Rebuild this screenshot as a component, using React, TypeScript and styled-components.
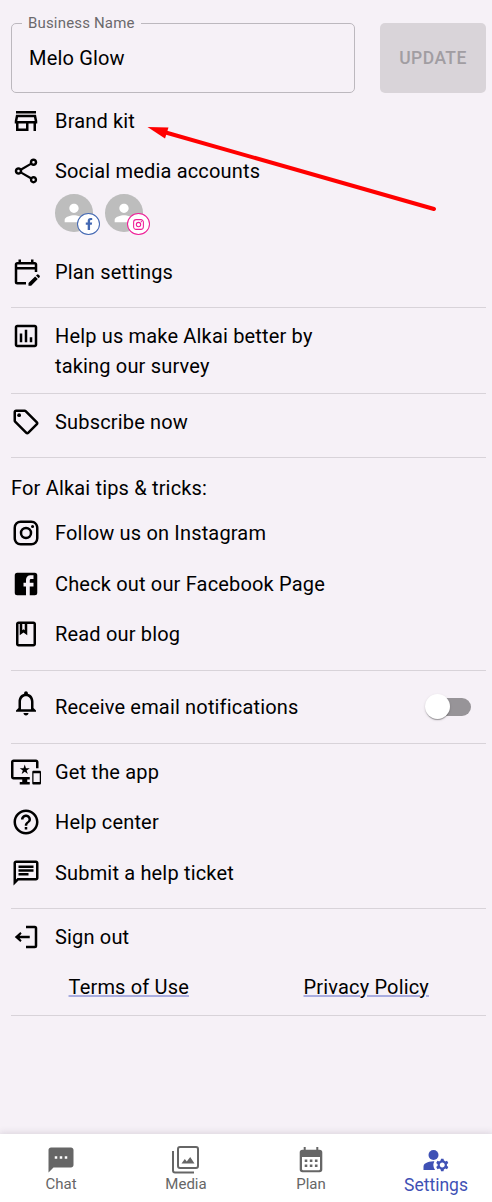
import React from "react";
import styled, { createGlobalStyle } from "styled-components";
import {
  MdOutlineStore,
  MdOutlineShare,
  MdOutlineEditCalendar,
  MdOutlinePoll,
  MdOutlineLocalOffer,
  MdOutlineClass,
  MdNotificationsNone,
  MdHelpOutline,
  MdOutlineChat,
  MdPerson,
  MdSms,
  MdManageAccounts,
} from "react-icons/md";
import { FaFacebookF } from "react-icons/fa";

const GlobalStyle = createGlobalStyle`
  * { box-sizing: border-box; }
  body {
    margin: 0;
    background: #f6f1f7;
    font-family: Roboto, sans-serif;
    color: #000;
  }
`;

const Page = styled.div`
  position: relative;
  display: flex;
  flex-direction: column;
  width: 492px;
  height: 1202px;
  overflow: hidden;
  background: #f6f1f7;
`;

const Content = styled.main`
  flex: 1;
  padding: 0 6px 0 11px;
`;

const Header = styled.div`
  display: flex;
  justify-content: space-between;
  padding: 14px 0 3px;
`;

const Field = styled.fieldset`
  width: 344px;
  height: 79px;
  margin: 0;
  padding: 0 17px;
  border: 1px solid #bcb8be;
  border-radius: 5px;
`;

const FieldLabel = styled.legend`
  height: 18px;
  margin-left: -7px;
  padding: 0 6px;
  font-size: 15px;
  line-height: 18px;
  letter-spacing: 0.17px;
  color: #6b696c;
`;

const FieldInput = styled.input`
  display: block;
  width: 100%;
  height: 52px;
  padding: 0;
  border: 0;
  outline: 0;
  background: transparent;
  font: 20px Roboto, sans-serif;
  letter-spacing: 0.17px;
  color: #000;
`;

const UpdateButton = styled.button`
  width: 106px;
  height: 70px;
  margin-top: 9px;
  padding: 0;
  border: 0;
  border-radius: 5px;
  background: #d9d4d9;
  color: #a19da2;
  font: 500 17.5px Roboto, sans-serif;
  letter-spacing: 0.45px;
`;

const Section = styled.section<{ $top?: number; $bottom?: number }>`
  padding-top: ${(p) => p.$top ?? 0}px;
  padding-bottom: ${(p) => p.$bottom ?? 0}px;
  border-bottom: 1px solid #d8d3d9;
`;

const Row = styled.div<{ $gap?: number }>`
  display: flex;
  align-items: flex-start;
  margin-bottom: ${(p) => p.$gap ?? 0}px;
`;

const IconSlot = styled.span<{ $raise?: number }>`
  display: flex;
  flex: none;
  width: 30px;
  height: 30px;
  margin-top: ${(p) => -(p.$raise ?? 0)}px;
  margin-right: 14px;
  svg {
    width: 30px;
    height: 30px;
  }
`;

const Label = styled.span`
  max-width: 290px;
  font-size: 20px;
  line-height: 30px;
  letter-spacing: 0.17px;
`;

const Avatars = styled.div`
  display: flex;
  gap: 12.5px;
  height: 38px;
  margin: -7px 0 25px 44px;
`;

const Avatar = styled.div`
  position: relative;
  display: flex;
  align-items: center;
  justify-content: center;
  width: 37.5px;
  height: 37.5px;
  border-radius: 50%;
  background: #bdbdbd;
  color: #fff;
`;

const Badge = styled.span<{ $color: string }>`
  position: absolute;
  left: 22px;
  top: 19px;
  display: flex;
  align-items: center;
  justify-content: center;
  width: 23px;
  height: 22px;
  border: 1px solid ${(p) => p.$color};
  border-radius: 50%;
  background: #fff;
  color: ${(p) => p.$color};
`;

const Switch = styled.span`
  display: flex;
  align-items: center;
  width: 46px;
  height: 18px;
  margin: 6px 15px 0 auto;
  border-radius: 9px;
  background: linear-gradient(#979498, #979498) right / 36px 18px no-repeat;
`;

const Knob = styled.span`
  width: 25px;
  height: 25px;
  margin-top: -1px;
  border-radius: 50%;
  background: #fff;
  box-shadow: 0 2px 1px -1px rgba(0, 0, 0, 0.2), 0 1px 1px rgba(0, 0, 0, 0.14),
    0 1px 3px rgba(0, 0, 0, 0.12);
`;

const Links = styled.div`
  display: grid;
  grid-template-columns: 1fr 1fr;
  justify-items: center;
`;

const Link = styled.a`
  margin-right: 2px;
  font-size: 20px;
  line-height: 30px;
  letter-spacing: 0.17px;
  text-decoration: underline;
  text-decoration-color: #a9ade0;
  text-decoration-thickness: 2px;
`;

const BottomNav = styled.nav`
  display: flex;
  height: 68px;
  background: #fff;
  box-shadow: 0 0 7px 1px rgba(60, 40, 70, 0.15);
`;

const NavItem = styled.div<{ $active?: boolean }>`
  display: flex;
  flex: none;
  flex-direction: column;
  align-items: center;
  width: 125px;
  padding-top: 11px;
  font-size: ${(p) => (p.$active ? 17.5 : 15)}px;
  line-height: ${(p) => (p.$active ? 20 : 18)}px;
  color: ${(p) => (p.$active ? "#3f51b5" : "#666")};
  &:first-child {
    margin-left: -1.5px;
  }
  svg {
    flex: none;
  }
`;

const Arrow = styled.svg`
  position: absolute;
  left: 0;
  top: 0;
  pointer-events: none;
`;

const INSTAGRAM =
  "M7.8 2h8.4C19.4 2 22 4.6 22 7.8v8.4a5.8 5.8 0 0 1-5.8 5.8H7.8C4.6 22 2 19.4 2 16.2V7.8A5.8 5.8 0 0 1 7.8 2m-.2 2A3.6 3.6 0 0 0 4 7.6v8.8C4 18.39 5.61 20 7.6 20h8.8a3.6 3.6 0 0 0 3.6-3.6V7.6C20 5.61 18.39 4 16.4 4H7.6m9.65 1.5a1.25 1.25 0 0 1 1.25 1.25A1.25 1.25 0 0 1 17.25 8 1.25 1.25 0 0 1 16 6.75a1.25 1.25 0 0 1 1.25-1.25M12 7a5 5 0 0 1 5 5 5 5 0 0 1-5 5 5 5 0 0 1-5-5 5 5 0 0 1 5-5m0 2a3 3 0 0 0-3 3 3 3 0 0 0 3 3 3 3 0 0 0 3-3 3 3 0 0 0-3-3z";
const FACEBOOK =
  "M5 3h14a2 2 0 0 1 2 2v14a2 2 0 0 1-2 2H5a2 2 0 0 1-2-2V5a2 2 0 0 1 2-2m13 2h-2.5A3.5 3.5 0 0 0 12 8.5V11h-2v3h2v7h3v-7h3v-3h-3V9a1 1 0 0 1 1-1h2V5z";
const DEVICES =
  "M23 11.01L18 11c-.55 0-1 .45-1 1v9c0 .55.45 1 1 1h5c.55 0 1-.45 1-1v-9c0-.55-.45-.99-1-.99zM23 20h-5v-7h5v7zM20 2H2C.89 2 0 2.89 0 4v12c0 1.1.89 2 2 2h7v2H7v2h8v-2h-2v-2h2v-2H2V4h18v5h2V4c0-1.11-.9-2-2-2zm-8.03 7L11 6l-.97 3H7l2.47 1.76-.94 2.91 2.47-1.8 2.47 1.8-.94-2.91L15 9h-3.03z";

const Glyph = ({ d, size = 30 }: { d: string; size?: number }) => (
  <svg width={size} height={size} viewBox="0 0 24 24" fill="currentColor">
    <path d={d} />
  </svg>
);

const SignOutIcon = () => (
  <svg viewBox="0 0 24 24" fill="none" stroke="currentColor" strokeWidth="2">
    <path d="M12 4h7q1 0 1 1v14q0 1-1 1h-7" />
    <path d="M15 12H5" />
    <path d="M7.5 8 3 12l4.500 4 1-1.200-1.500-1.800v-2l1.500-1.800z" fill="currentColor" stroke="none" />
  </svg>
);

const MediaIcon = () => (
  <svg width="30" height="30" viewBox="0 0 30 30" fill="none" stroke="currentColor" strokeWidth="2">
    <rect x="7" y="2" width="20" height="21" rx="2" />
    <path d="M2 6v19.500q0 2 2 2h19" />
    <path d="m10.500 18.500 3.300-4.500 2 2.400 3.400-4.400 4.300 6.500z" fill="currentColor" stroke="none" />
  </svg>
);

const PlanIcon = () => (
  <svg width="30" height="30" viewBox="0 0 30 30" fill="currentColor">
    <path
      fillRule="evenodd"
      d="M7.700 2h2v2.700h10.600V2h2v2.700h1.200q2.800 0 2.800 2.800v17q0 2.800-2.800 2.800h-17q-2.800 0-2.800-2.800v-17q0-2.800 2.800-2.800h1.200zM6 12v12q0 1.200 1.200 1.200h15.600q1.200 0 1.200-1.200V12z"
    />
    <path d="M8.700 14.500h2.600v2.600H8.700zM13.800 14.500h2.600v2.600h-2.600zM18.900 14.500h2.600v2.600h-2.600zM8.700 19.500h2.600v2.600H8.700zM13.800 19.500h2.600v2.600h-2.600zM18.900 19.500h2.600v2.600h-2.600z" />
  </svg>
);

interface ItemProps {
  icon: React.ReactNode;
  children: React.ReactNode;
  gap?: number;
  raise?: number;
  action?: React.ReactNode;
}

const Item = ({ icon, children, gap, raise, action }: ItemProps) => (
  <Row $gap={gap}>
    <IconSlot $raise={raise}>{icon}</IconSlot>
    <Label>{children}</Label>
    {action}
  </Row>
);

export default function App() {
  return (
    <Page>
      <GlobalStyle />
      <Content>
        <Header>
          <Field>
            <FieldLabel>Business Name</FieldLabel>
            <FieldInput defaultValue="Melo Glow" aria-label="Business Name" />
          </Field>
          <UpdateButton disabled>UPDATE</UpdateButton>
        </Header>
        <Section $top={10} $bottom={20}>
          <Item icon={<MdOutlineStore />} gap={20}>Brand kit</Item>
          <Item icon={<MdOutlineShare />} gap={15}>Social media accounts</Item>
          <Avatars>
            <Avatar>
              <MdPerson size={28} />
              <Badge $color="#4267b2"><FaFacebookF size={12} /></Badge>
            </Avatar>
            <Avatar>
              <MdPerson size={28} />
              <Badge $color="#ee1c96"><Glyph d={INSTAGRAM} size={13} /></Badge>
            </Avatar>
          </Avatars>
          <Item icon={<MdOutlineEditCalendar />}>Plan settings</Item>
        </Section>
        <Section $top={13} $bottom={12}>
          <Item icon={<MdOutlinePoll />}>Help us make Alkai better by taking our survey</Item>
        </Section>
        <Section $top={13} $bottom={20}>
          <Item icon={<MdOutlineLocalOffer />}>Subscribe now</Item>
        </Section>
        <Section $top={15} $bottom={21}>
          <Row $gap={15}><Label>For Alkai tips &amp; tricks:</Label></Row>
          <Item icon={<Glyph d={INSTAGRAM} />} gap={21}>Follow us on Instagram</Item>
          <Item icon={<Glyph d={FACEBOOK} />} gap={20}>Check out our Facebook Page</Item>
          <Item icon={<MdOutlineClass />}>Read our blog</Item>
        </Section>
        <Section $top={21} $bottom={21}>
          <Item icon={<MdNotificationsNone />} raise={4} action={<Switch><Knob /></Switch>}>
            Receive email notifications
          </Item>
        </Section>
        <Section $top={13} $bottom={20}>
          <Item icon={<Glyph d={DEVICES} />} gap={20}>Get the app</Item>
          <Item icon={<MdHelpOutline />} gap={21}>Help center</Item>
          <Item icon={<MdOutlineChat />}>Submit a help ticket</Item>
        </Section>
        <Section $top={13} $bottom={13}>
          <Item icon={<SignOutIcon />} gap={20}>Sign out</Item>
          <Links>
            <Link>Terms of Use</Link>
            <Link>Privacy Policy</Link>
          </Links>
        </Section>
      </Content>
      <BottomNav>
        <NavItem><MdSms size={30} />Chat</NavItem>
        <NavItem><MediaIcon />Media</NavItem>
        <NavItem><PlanIcon />Plan</NavItem>
        <NavItem $active><MdManageAccounts size={30} />Settings</NavItem>
      </BottomNav>
      <Arrow width="492" height="240" viewBox="0 0 492 240">
        <path d="M434 209 164 132" stroke="#f00" strokeWidth="4" strokeLinecap="round" />
        <path d="m147.500 127 21 0.500-3.500 11z" fill="#f00" />
      </Arrow>
    </Page>
  );
}
